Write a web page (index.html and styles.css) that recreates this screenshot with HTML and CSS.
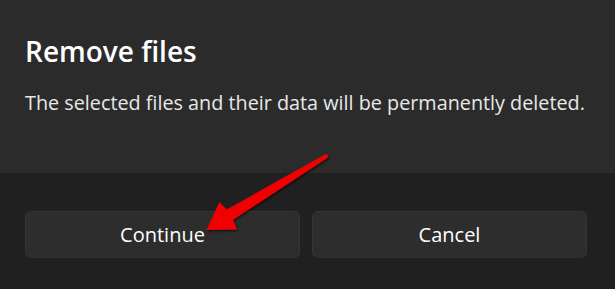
FILE: index.html
```html
<!DOCTYPE html>
<html lang="en">
<head>
  <meta charset="UTF-8" />
  <title>Remove files</title>
  <link rel="stylesheet" href="styles.css">
</head>
<body>
  <div class="dialog">
    <div class="dialog-body">
      <h1 class="title">Remove files</h1>
      <p class="message">The selected files and their data will be permanently deleted.</p>
    </div>
    <div class="dialog-footer">
      <button class="btn">Continue</button>
      <button class="btn">Cancel</button>
    </div>

    <!-- annotation arrow -->
    <svg class="arrow" width="615" height="289" viewBox="0 0 615 289">
      <defs>
        <filter id="shadow" x="-20%" y="-20%" width="140%" height="140%">
          <feDropShadow dx="1" dy="1.5" stdDeviation="1.2" flood-color="#000" flood-opacity="0.6"/>
        </filter>
      </defs>
      <path d="M325.4 154.3 Q329.2 154.6 327.6 157.7 L233.1 219.7 L237 229.5 L206.5 230 L219.5 202 L226.7 209.5 Z" fill="#f00000" filter="url(#shadow)"/>
    </svg>
  </div>
</body>
</html>
```

FILE: styles.css
```css
* {
  box-sizing: border-box;
}

body {
  margin: 0;
  background: #202020;
  font-family: 'Open Sans', 'Noto Sans', sans-serif;
}

.dialog {
  width: 615px;
  height: 289px;
  position: relative;
  overflow: hidden;
}

.dialog-body {
  height: 173px;
  background: #2b2b2b;
  padding: 33px 28px 0 25px;
}

.title {
  margin: 0;
  font-size: 28px;
  font-weight: 600;
  color: #fff;
  line-height: 36px;
}

.message {
  margin: 21px 0 0;
  font-size: 19.8px;
  color: #e8e8e8;
  line-height: 26px;
  white-space: nowrap;
}

.dialog-footer {
  height: 116px;
  background: #202020;
  padding: 38px 28px 0 25px;
  display: grid;
  grid-template-columns: 1fr 1fr;
  gap: 12px;
  align-items: start;
}

.btn {
  height: 47px;
  background: #2d2d2d;
  border: 1px solid #353535;
  border-bottom-color: #303030;
  border-radius: 6px;
  color: #fff;
  font-family: inherit;
  font-size: 20px;
}

.arrow {
  position: absolute;
  top: 0;
  left: 0;
}
```
